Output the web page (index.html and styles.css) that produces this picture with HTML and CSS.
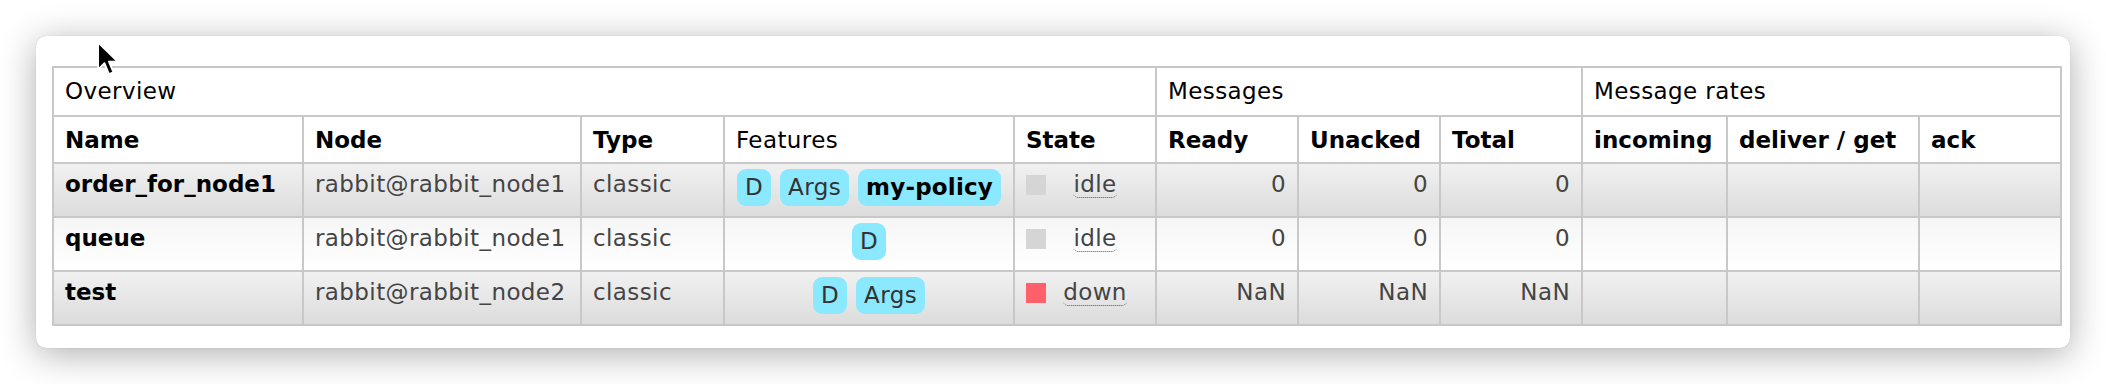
FILE: index.html
```html
<!DOCTYPE html>
<html lang="en">
<head>
    <meta charset="UTF-8">
    <title>Queues</title>
    <link rel="stylesheet" href="styles.css">
</head>
<body>
    <div class="window">
        <!-- mouse pointer -->
        <svg class="cursor" width="26" height="37" viewBox="0 0 24 34">
            <path d="M2 1.5 V26 L7.8 20.3 L12 30.5 L16 28.8 L11.9 19 H20 Z" fill="#000" stroke="#fff" stroke-width="1.6" stroke-linejoin="round"/>
        </svg>
        <table class="list">
            <colgroup>
                <col class="c-name">
                <col class="c-node">
                <col class="c-type">
                <col class="c-features">
                <col class="c-state">
                <col class="c-num">
                <col class="c-num">
                <col class="c-num">
                <col class="c-rate">
                <col class="c-rate-wide">
                <col class="c-num">
            </colgroup>
            <thead>
                <tr class="group">
                    <th colspan="5">Overview</th>
                    <th colspan="3">Messages</th>
                    <th colspan="3">Message rates</th>
                </tr>
                <tr>
                    <th>Name</th>
                    <th>Node</th>
                    <th>Type</th>
                    <th class="plain">Features</th>
                    <th>State</th>
                    <th>Ready</th>
                    <th>Unacked</th>
                    <th>Total</th>
                    <th>incoming</th>
                    <th>deliver / get</th>
                    <th>ack</th>
                </tr>
            </thead>
            <tbody>
                <tr class="alt1">
                    <td class="name">order_for_node1</td>
                    <td>rabbit@rabbit_node1</td>
                    <td>classic</td>
                    <td class="features-cell">
                        <div class="features">
                            <span class="tag">D</span>
                            <span class="tag">Args</span>
                            <span class="tag policy">my-policy</span>
                        </div>
                    </td>
                    <td>
                        <div class="state">
                            <span class="dot idle"></span>
                            <span class="state-text"><abbr>idle</abbr></span>
                        </div>
                    </td>
                    <td class="r">0</td>
                    <td class="r">0</td>
                    <td class="r">0</td>
                    <td></td>
                    <td></td>
                    <td></td>
                </tr>
                <tr class="alt2">
                    <td class="name">queue</td>
                    <td>rabbit@rabbit_node1</td>
                    <td>classic</td>
                    <td class="features-cell">
                        <div class="features">
                            <span class="tag">D</span>
                        </div>
                    </td>
                    <td>
                        <div class="state">
                            <span class="dot idle"></span>
                            <span class="state-text"><abbr>idle</abbr></span>
                        </div>
                    </td>
                    <td class="r">0</td>
                    <td class="r">0</td>
                    <td class="r">0</td>
                    <td></td>
                    <td></td>
                    <td></td>
                </tr>
                <tr class="alt1">
                    <td class="name">test</td>
                    <td>rabbit@rabbit_node2</td>
                    <td>classic</td>
                    <td class="features-cell">
                        <div class="features">
                            <span class="tag">D</span>
                            <span class="tag">Args</span>
                        </div>
                    </td>
                    <td>
                        <div class="state">
                            <span class="dot down"></span>
                            <span class="state-text"><abbr>down</abbr></span>
                        </div>
                    </td>
                    <td class="r">NaN</td>
                    <td class="r">NaN</td>
                    <td class="r">NaN</td>
                    <td></td>
                    <td></td>
                    <td></td>
                </tr>
            </tbody>
        </table>
    </div>
</body>
</html>
```

FILE: styles.css
```css
html, body {
    margin: 0;
    background: #fff;
    font-family: "DejaVu Sans", Verdana, sans-serif;
}
.window {
    position: relative;
    margin: 36px;
    height: 312px;
    box-sizing: border-box;
    padding: 30px 0 0 16px;
    background: #fff;
    border-radius: 10px;
    box-shadow: 0 6px 36px rgba(0, 0, 0, 0.32), 0 0 1px rgba(0, 0, 0, 0.25);
}
.cursor {
    position: absolute;
    left: 60px;
    top: 5px;
    z-index: 2;
}

/* queue list */
.list {
    border-collapse: collapse;
    table-layout: fixed;
    width: 2010px;
    font-size: 23px;
    line-height: 27px;
    letter-spacing: 0.4px; /* regular text runs a little wide */
    color: #444;
}
.c-name { width: 250px; }
.c-node { width: 278px; }
.c-type { width: 143px; }
.c-features { width: 290px; }
.c-state { width: 142px; }
.c-num { width: 142px; }
.c-rate { width: 145px; }
.c-rate-wide { width: 192px; }
.list th,
.list td {
    border: 2px solid #c8c8c8;
    text-align: left;
    vertical-align: top;
    white-space: nowrap;
    overflow: hidden;
}
.list th {
    color: #000;
    background: #fff;
    padding: 10px 11px 8px;
    letter-spacing: 0;
}
.list .group th,
.list th.plain {
    font-weight: normal;
    letter-spacing: 0.4px;
}
.list .group th {
    padding-bottom: 10px;
}
.list td {
    padding: 7px 11px 18px;
}
.list tr.alt1 td {
    background: linear-gradient(#f1f1f1, #dcdcdc);
}
.list tr.alt2 td {
    background: linear-gradient(#f6f6f6, #fff);
}
.list td.name {
    color: #000;
    font-weight: bold;
    letter-spacing: 0;
}
.list td.r {
    text-align: right;
}

/* feature badges */
.list td.features-cell {
    padding: 5px 8px 10px;
}
.features {
    display: flex;
    justify-content: center;
    gap: 9px;
}
.tag {
    display: block;
    padding: 5px 8px;
    border-radius: 9px;
    background: #8ae8ff;
    color: #333;
}
.tag.policy {
    color: #000;
    font-weight: bold;
    letter-spacing: 0.2px;
}

/* state column */
.state {
    display: flex;
    align-items: flex-start;
}
.dot {
    width: 20px;
    height: 20px;
    margin-top: 4px;
    flex: none;
}
.dot.idle { background: #d5d5d5; }
.dot.down { background: #ff6069; }
.state-text {
    flex: 1;
    text-align: center;
}
.state abbr {
    text-decoration: none;
    border-bottom: 1px dotted #555;
    border-radius: 0 0 5px 5px;
}
```
